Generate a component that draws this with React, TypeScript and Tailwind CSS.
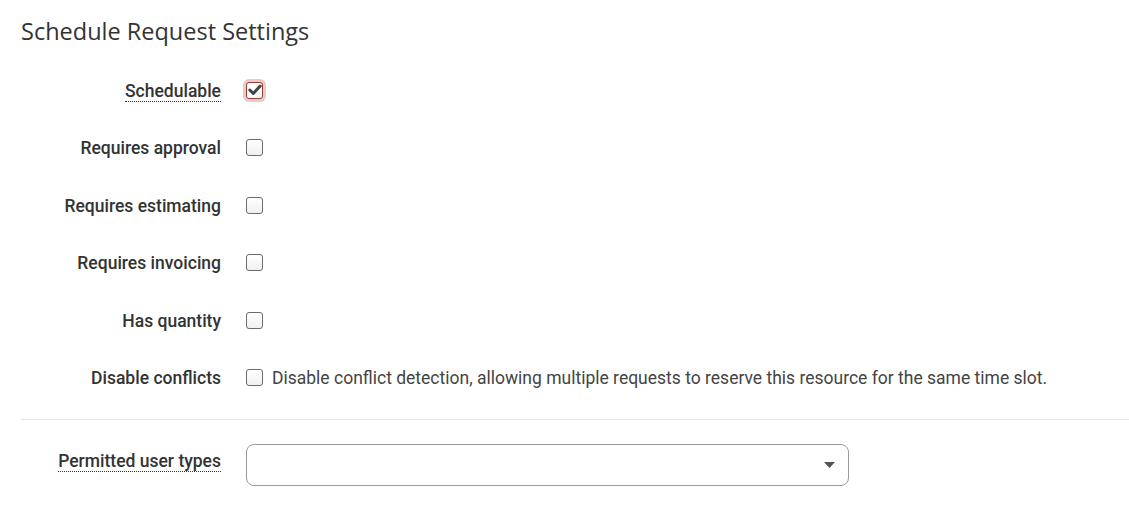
import { useState } from 'react';

type Row = { label: string; help?: string; hint?: string; checked?: boolean };

const rows: Row[] = [
  { label: 'Schedulable', checked: true, help: 'yes' },
  { label: 'Requires approval' },
  { label: 'Requires estimating' },
  { label: 'Requires invoicing' },
  { label: 'Has quantity' },
  {
    label: 'Disable conflicts',
    hint: 'Disable conflict detection, allowing multiple requests to reserve this resource for the same time slot.',
  },
];

function Checkbox({ checked, focused }: { checked: boolean; focused?: boolean }) {
  return (
    <span
      className={
        focused
          ? 'mb-[2px] flex h-[17px] w-[17px] items-center justify-center rounded-[3px] border border-[#9a3b30] bg-white shadow-[0_0_0_3px_rgba(169,68,66,0.28)]'
          : 'mb-[2px] flex h-[17px] w-[17px] items-center justify-center rounded-[3px] border border-[#6b6b6b] bg-gradient-to-b from-white to-[#f0f0f0]'
      }
    >
      {checked && (
        <svg width="14" height="12" viewBox="0 0 14 12">
          <path d="M1.8 6 L5.3 9.5 L12.2 2" fill="none" stroke="#444" strokeWidth="3" strokeLinecap="round" strokeLinejoin="round" />
        </svg>
      )}
    </span>
  );
}

export default function App() {
  const [values, setValues] = useState(rows.map((r) => !!r.checked));

  return (
    <div className="min-h-screen bg-white pl-[21px] pt-[14px] text-[#333] font-['Roboto',sans-serif]">
      <h2 className="text-[23.5px] leading-[34px] text-[#333] font-['Open_Sans',sans-serif]">
        Schedule Request Settings
      </h2>

      <div className="mt-[24px] flex flex-col gap-[19.5px]">
        {rows.map((row, i) => (
          <div key={row.label} className="flex h-[38px] items-center">
            <div className="w-[200px] text-right text-[17.5px] font-medium">
              {row.help ? (
                <span className="border-b border-dotted border-[#333]">{row.label}</span>
              ) : (
                row.label
              )}
            </div>
            <label
              className="ml-[25px] flex cursor-pointer items-center gap-[9px]"
              onClick={() => setValues((v) => v.map((x, j) => (j === i ? !x : x)))}
            >
              <Checkbox checked={values[i]} focused={i === 0} />
              {row.hint && <span className="text-[17.5px] text-[#444]">{row.hint}</span>}
            </label>
          </div>
        ))}
      </div>

      <div className="mt-[21px] border-t border-[#e6e6e6]" />

      <div className="mt-[24px] flex items-start">
        <div className="w-[200px] pt-[4px] text-right text-[17.5px] font-medium">
          <span className="border-b border-dotted border-[#333]">Permitted user types</span>
        </div>
        <div className="ml-[25px] flex h-[42px] w-[603px] items-center justify-end rounded-[8px] border border-[#9a9a9a] bg-white pr-[13px]">
          <svg width="11" height="6" viewBox="0 0 11 6">
            <path d="M0 0 H11 L5.5 6 Z" fill="#555" />
          </svg>
        </div>
      </div>
    </div>
  );
}
